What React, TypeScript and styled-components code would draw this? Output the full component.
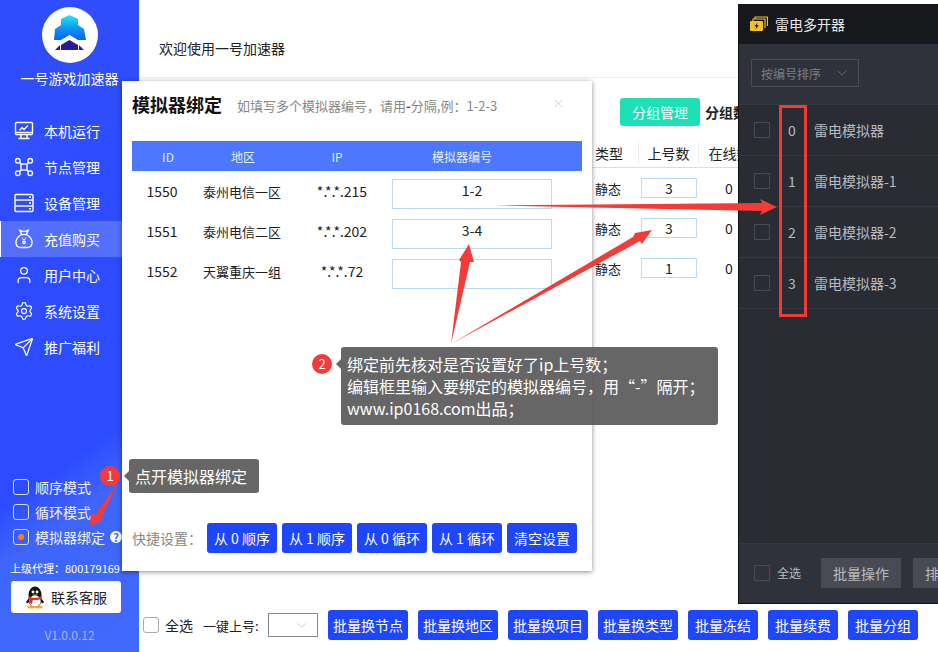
import React from "react";
import styled, { createGlobalStyle } from "styled-components";
import { Send, Settings, User, X, ChevronDown } from "lucide-react";

const GlobalStyle = createGlobalStyle`
  html, body {
    margin: 0;
    padding: 0;
    background: #fff;
  }
  * {
    box-sizing: border-box;
  }
  body {
    font-family: "Noto Sans CJK SC", "Noto Sans", sans-serif;
    font-size: 14px;
    color: #222;
  }
`;

const Page = styled.div`
  position: relative;
  display: flex;
  width: 938px;
  height: 652px;
  overflow: hidden;
  background: #fff;
`;

/* sidebar */
const Sidebar = styled.aside`
  flex: 0 0 139px;
  display: flex;
  flex-direction: column;
  align-items: stretch;
  color: #fff;
  background:
    radial-gradient(circle at 40px -60px, #2f4dfb 0 194px, transparent 195px),
    linear-gradient(145deg, #3a5bfc 0%, #2d4cff 30%, #2d4cff 68%, #3f66fb 76%, #4169fb 100%);
`;

const LogoCircle = styled.div`
  width: 56px;
  height: 56px;
  margin: 7px auto 0;
  border-radius: 50%;
  background: #fff;
  display: flex;
  align-items: flex-start;
  justify-content: center;
  padding-top: 8px;
`;

const BrandName = styled.div`
  margin-top: 5px;
  height: 20px;
  line-height: 20px;
  text-align: center;
  font-size: 14px;
`;

const Menu = styled.nav`
  margin-top: 25px;
  display: flex;
  flex-direction: column;
`;

const MenuItem = styled.div<{ $active?: boolean }>`
  height: 36px;
  display: flex;
  align-items: center;
  gap: 10px;
  padding-left: 14px;
  font-size: 14px;
  background: ${(p) => (p.$active ? "#5470fb" : "transparent")};
  border-left: ${(p) => (p.$active ? "1px solid #fff" : "0")};
  ${(p) => p.$active && "padding-left: 13px;"}
`;

const IconSlot = styled.span`
  width: 20px;
  height: 20px;
  display: flex;
  align-items: center;
  justify-content: center;
`;

const SideBottom = styled.div`
  margin-top: auto;
  display: flex;
  flex-direction: column;
`;

const ModeList = styled.div`
  display: flex;
  flex-direction: column;
  padding-left: 13px;
`;

const ModeRow = styled.label`
  height: 25px;
  display: flex;
  align-items: center;
  gap: 6px;
  font-size: 14px;
  white-space: nowrap;
  color: #f2f4ff;
`;

const ModeBox = styled.span`
  width: 16px;
  height: 16px;
  border: 1px solid #d5dcff;
  border-radius: 3px;
  display: flex;
  align-items: center;
  justify-content: center;
`;

const OrangeDot = styled.span`
  width: 6px;
  height: 6px;
  border-radius: 50%;
  background: #ff7f0e;
`;

const HelpDot = styled.span`
  width: 12px;
  height: 12px;
  margin-left: -1px;
  border-radius: 50%;
  background: #fff;
  color: #3f66fb;
  font-size: 11px;
  font-weight: 700;
  line-height: 12px;
  text-align: center;
`;

const Agent = styled.div`
  margin-top: 11px;
  padding-left: 10px;
  height: 16px;
  line-height: 16px;
  font-size: 11px;
  white-space: nowrap;
`;

const ServiceButton = styled.button`
  margin: 5px 0 0 11px;
  width: 110px;
  height: 32px;
  border: 0;
  border-radius: 3px;
  background: #fff;
  color: #222;
  font: inherit;
  font-size: 14px;
  display: flex;
  align-items: center;
  justify-content: center;
  gap: 6px;
`;

const Version = styled.div`
  margin: 12px 0 7px;
  height: 20px;
  line-height: 20px;
  text-align: center;
  font-size: 12px;
  color: #a9b4dc;
`;

/* main column */
const Main = styled.main`
  flex: 1;
  display: flex;
  flex-direction: column;
  min-width: 0;
`;

const Welcome = styled.div`
  height: 78px;
  padding: 38px 0 0 20px;
  line-height: 20px;
  font-size: 14px;
  border-bottom: 1px solid #eee;
`;

const Toolbar = styled.div`
  margin-top: 20px;
  padding-left: 481px;
  height: 28px;
  display: flex;
  align-items: center;
  gap: 5px;
  white-space: nowrap;
`;

const TealButton = styled.button`
  width: 80px;
  height: 28px;
  border: 0;
  border-radius: 3px;
  background: #1de0b4;
  color: #fff;
  font: inherit;
  font-size: 14px;
`;

const StrongLabel = styled.span`
  font-weight: 700;
  font-size: 14px;
`;

const Table = styled.div`
  margin-top: 12px;
  padding-left: 451px;
  display: flex;
  flex-direction: column;
`;

const TableHead = styled.div`
  height: 30px;
  display: grid;
  grid-template-columns: 48px 60px 62px;
  align-items: center;
  border-bottom: 1px solid #ddd;
`;

const HeadCell = styled.div<{ $first?: boolean }>`
  height: 22px;
  line-height: 22px;
  text-align: center;
  white-space: nowrap;
  font-size: 14px;
  border-left: ${(p) => (p.$first ? "0" : "1px solid #eee")};
  ${(p) => p.$first && "text-align: left; padding-left: 5px;"}
`;

const TableRow = styled.div`
  height: 40px;
  display: grid;
  grid-template-columns: 48px 60px 62px;
  align-items: center;
`;

const TypeCell = styled.div`
  padding-left: 5px;
  font-size: 13px;
`;

const CountCell = styled.div`
  display: flex;
  justify-content: center;
  padding-left: 2px;
`;

const CountInput = styled.div`
  width: 56px;
  height: 20px;
  line-height: 18px;
  text-align: center;
  border: 1px solid #b8dcf5;
  font-size: 14px;
`;

const NumCell = styled.div`
  text-align: center;
  font-size: 14px;
`;

const BottomBar = styled.div`
  margin-top: auto;
  height: 42px;
  padding: 0 0 12px 4px;
  display: flex;
  align-items: center;
  white-space: nowrap;
`;

const PlainBox = styled.span`
  width: 16px;
  height: 16px;
  border: 1px solid #aaa;
  border-radius: 3px;
`;

const BarLabel = styled.span<{ $left: number }>`
  margin-left: ${(p) => p.$left}px;
  font-size: 14px;
`;

const QuickLabel = styled(BarLabel)`
  width: 55px;
  font-size: 13px;
`;

const SelectBox = styled.div`
  width: 50px;
  height: 24px;
  margin: 0 10px;
  border: 1px solid #888;
  display: flex;
  align-items: center;
  justify-content: flex-end;
  padding-right: 8px;
  color: #bbb;
`;

const BlueButton = styled.button<{ $width: number }>`
  width: ${(p) => p.$width}px;
  height: 30px;
  padding: 0;
  border: 0;
  border-radius: 3px;
  background: #1e46ff;
  color: #fff;
  font: inherit;
  font-size: 14px;
  white-space: nowrap;
`;

const ButtonRow = styled.div<{ $gap: number }>`
  display: flex;
  gap: ${(p) => p.$gap}px;
`;

/* bind dialog */
const Dialog = styled.section`
  position: absolute;
  left: 122px;
  top: 81px;
  width: 470px;
  height: 490px;
  padding: 0 10px 18px;
  background: #fff;
  box-shadow: 0 1px 5px rgba(0, 0, 0, 0.45);
  display: flex;
  flex-direction: column;
`;

const DialogHead = styled.div`
  height: 60px;
  padding-top: 10px;
  display: flex;
  align-items: flex-start;
  position: relative;
`;

const DialogTitle = styled.h2`
  margin: 0;
  font-size: 18px;
  line-height: 26px;
  font-weight: 700;
  color: #111;
`;

const DialogHint = styled.span`
  margin: 4px 0 0 15px;
  line-height: 22px;
  font-size: 13px;
  color: #888;
`;

const RedDash = styled.b`
  color: #f00;
`;

const CloseIcon = styled.span`
  position: absolute;
  left: 420px;
  top: 16px;
  color: #aaa;
  display: flex;
`;

const BindHead = styled.div`
  height: 30px;
  background: #4c78ff;
  color: #e8eeff;
  font-size: 12px;
  display: grid;
  grid-template-columns: 72px 78px 110px 1fr;
  align-items: center;
  text-align: center;
`;

const BindHeadLast = styled.div`
  padding-right: 50px;
`;

const BindRows = styled.div`
  margin-top: 3px;
  display: flex;
  flex-direction: column;
`;

const BindRow = styled.div`
  height: 40px;
  display: grid;
  grid-template-columns: 60px 100px 100px 1fr;
  align-items: center;
  text-align: center;
`;

const BindId = styled.div`
  font-size: 14px;
  padding-bottom: 6px;
`;

const BindArea = styled.div`
  font-size: 13px;
  white-space: nowrap;
  padding-bottom: 6px;
`;

const BindInput = styled.div`
  width: 160px;
  height: 30px;
  line-height: 20px;
  border: 1px solid #b8dcf5;
  font-size: 14px;
`;

const DialogFoot = styled.div`
  margin-top: auto;
  display: flex;
  align-items: center;
`;

const FootLabel = styled.span`
  width: 75px;
  color: #888;
  font-size: 14px;
  white-space: nowrap;
`;

/* LD player window */
const DarkWindow = styled.section`
  position: absolute;
  left: 738px;
  top: 4px;
  width: 300px;
  height: 600px;
  background: #30323b;
  display: flex;
  flex-direction: column;
  color: #b9bbc0;
  border-left: 1px solid #111;
  border-bottom: 1px solid #111;
`;

const DarkTitle = styled.div`
  height: 40px;
  background: #17181c;
  color: #e8e8ea;
  display: flex;
  align-items: center;
  gap: 7px;
  padding-left: 11px;
  font-size: 14px;
`;

const DarkTools = styled.div`
  height: 60px;
  padding: 15px 0 0 12px;
`;

const DarkSelect = styled.div`
  width: 108px;
  height: 28px;
  border: 1px solid #4a4c56;
  display: flex;
  align-items: center;
  justify-content: space-between;
  padding: 0 8px 0 9px;
  font-size: 12px;
  color: #7b7d85;
`;

const DarkList = styled.div`
  flex: 1;
  background: #2a2c34;
  display: flex;
  flex-direction: column;
`;

const DarkRow = styled.div`
  height: 51px;
  display: flex;
  align-items: center;
  padding-left: 15px;
  border-top: 1px solid #363841;
  font-size: 14px;

  &:last-child {
    height: 52px;
    border-bottom: 1px solid #363841;
  }
`;

const DarkBox = styled.span`
  width: 16px;
  height: 16px;
  flex: none;
  border: 1px solid #474953;
`;

const DarkIndex = styled.span`
  width: 44px;
  text-align: center;
`;

const DarkFoot = styled.div`
  height: 60px;
  display: flex;
  align-items: center;
  padding: 0 0 2px 15px;
  border-top: 1px solid #363841;
`;

const DarkAll = styled.span`
  margin-left: 7px;
  font-size: 12px;
`;

const DarkButton = styled.button`
  flex: none;
  width: 80px;
  height: 30px;
  margin-left: 20px;
  border: 0;
  background: #484a54;
  color: #b9bbc0;
  font: inherit;
  font-size: 14px;
`;

const DarkButtonNext = styled(DarkButton)`
  margin-left: 12px;
  padding: 0 0 0 12px;
  text-align: left;
`;

/* annotations laid over the screenshot */
const ArrowLayer = styled.svg`
  position: absolute;
  left: 0;
  top: 0;
  pointer-events: none;
`;

const RedFrame = styled.div`
  position: absolute;
  left: 779px;
  top: 105px;
  width: 28px;
  height: 212px;
  border: 3px solid #f33a36;
`;

const Callout = styled.div<{ $left: number; $top: number; $width: number }>`
  position: absolute;
  left: ${(p) => p.$left}px;
  top: ${(p) => p.$top}px;
  width: ${(p) => p.$width}px;
  padding: 6px;
  border-radius: 3px;
  background: rgba(90, 90, 90, 0.93);
  color: #fff;
  font-size: 16px;
  line-height: 22px;
  white-space: nowrap;

  &::before {
    content: "";
    position: absolute;
    left: -5px;
    top: 12px;
    border-style: solid;
    border-width: 5px 5px 5px 0;
    border-color: transparent rgba(90, 90, 90, 0.93) transparent transparent;
  }
`;

const Badge = styled.div<{ $left: number; $top: number }>`
  position: absolute;
  left: ${(p) => p.$left}px;
  top: ${(p) => p.$top}px;
  width: 20px;
  height: 20px;
  border-radius: 50%;
  background: #f43a3a;
  color: #fff;
  font-size: 13px;
  line-height: 20px;
  text-align: center;
`;

const LogoIcon = () => (
  <svg width="36" height="36" viewBox="0 0 36 36">
    <defs>
      <linearGradient id="logoFill" x1="0" y1="0" x2="0" y2="1">
        <stop offset="0" stopColor="#1ee8ff" />
        <stop offset="0.5" stopColor="#0f9af2" />
        <stop offset="1" stopColor="#0c62ee" />
      </linearGradient>
    </defs>
    <path d="M17.5 0 L26 4 V10 L32 14 L34 25 L26 25 L17.5 20 L9 25 L2 25 L3 14 L9 10 V4 Z" fill="url(#logoFill)" />
    <path d="M17.5 25 L26 30 V35 H9 V30 Z" fill="#2a1a99" />
    <path d="M3 35 H8 V30 Z M32 35 H27 V30 Z" fill="#2a1a99" />
  </svg>
);

const MonitorIcon = () => (
  <svg width="20" height="20" viewBox="0 0 20 20" fill="none" stroke="#fff" strokeWidth="1.4">
    <rect x="1.5" y="1.5" width="17" height="12" rx="1" />
    <path d="M5.5 9.5 L8 6.5 L10 8.5 L14 4.5" />
    <path d="M1.5 11.5 H18.5" />
    <path d="M7 13.5 V17 M13 13.5 V17 M4.5 17.5 H15.5" />
  </svg>
);

const NodesIcon = () => (
  <svg width="20" height="20" viewBox="0 0 20 20" fill="none" stroke="#fff" strokeWidth="1.4">
    <circle cx="3.8" cy="3.8" r="2.3" />
    <circle cx="16.2" cy="3.8" r="2.3" />
    <circle cx="3.8" cy="16.2" r="2.3" />
    <circle cx="16.2" cy="16.2" r="2.3" />
    <rect x="7" y="7" width="6" height="6" />
    <path d="M5.5 5.5 L7 7 M14.5 5.5 L13 7 M5.5 14.5 L7 13 M14.5 14.5 L13 13" />
  </svg>
);

const ServerIcon = () => (
  <svg width="20" height="20" viewBox="0 0 20 20" fill="none" stroke="#fff" strokeWidth="1.4">
    <rect x="1" y="1.5" width="18" height="17" rx="1" />
    <path d="M1 7 H19 M1 13 H19" />
    <path d="M15 4.2 H17 M15 10 H17 M15 15.8 H17" />
  </svg>
);

const BagIcon = () => (
  <svg width="20" height="20" viewBox="0 0 20 20" fill="none" stroke="#fff" strokeWidth="1.4">
    <path d="M6 1.5 C8 2.5 12 2.5 14 1.5 L12.5 5.5 C16 7.5 18.5 11 18 14.5 C17.5 17.5 15.5 18.5 13 18.5 H7 C4.5 18.5 2.5 17.5 2 14.5 C1.5 11 4 7.5 7.5 5.5 Z" />
    <path d="M7.5 5.5 H12.5" />
    <path d="M8 8.5 L10 11.5 L12 8.5 M10 11.5 V15.5 M8 12.5 H12 M8 14 H12" strokeWidth="1" />
  </svg>
);

const PenguinIcon = () => (
  <svg width="20" height="23" viewBox="0 0 20 23">
    <path d="M4 12 L1 16 L2.5 17.5 L5 15 Z M16 12 L19 16 L17.5 17.5 L15 15 Z" fill="#111" />
    <ellipse cx="10" cy="9" rx="6.5" ry="8.5" fill="#111" />
    <ellipse cx="10" cy="15" rx="6" ry="6" fill="#fff" stroke="#111" strokeWidth="0.6" />
    <path d="M3.5 10 C7 12.5 13 12.5 16.5 10 L16.5 12.5 C13 14.5 7 14.5 3.5 12.5 Z" fill="#e02b20" />
    <path d="M4.5 13 L8 13 L7 18 L4.5 17 Z" fill="#e02b20" />
    <circle cx="8" cy="6" r="1.4" fill="#fff" />
    <circle cx="12" cy="6" r="1.4" fill="#fff" />
    <path d="M7.5 8.5 H12.5 L10 10.2 Z" fill="#f6a81c" />
    <ellipse cx="6" cy="21" rx="3.5" ry="1.6" fill="#f6a81c" />
    <ellipse cx="14" cy="21" rx="3.5" ry="1.6" fill="#f6a81c" />
  </svg>
);

const LdIcon = () => (
  <svg width="18" height="16" viewBox="0 0 18 16">
    <path d="M5 3 V1 H17.5 V10" fill="none" stroke="#f4c11f" strokeWidth="1.2" />
    <path d="M3 5 V3 H15 V12" fill="none" stroke="#f4c11f" strokeWidth="1.2" />
    <rect x="0" y="5" width="13" height="10" rx="1" fill="#f4c11f" />
    <path d="M7.5 6.5 L4.5 10.5 H6.5 L5.5 13.5 L8.8 9.2 H6.8 Z" fill="#17181c" />
  </svg>
);

const menu = [
  { label: "本机运行", icon: <MonitorIcon /> },
  { label: "节点管理", icon: <NodesIcon /> },
  { label: "设备管理", icon: <ServerIcon /> },
  { label: "充值购买", icon: <BagIcon />, active: true },
  { label: "用户中心", icon: <User size={20} strokeWidth={1.5} /> },
  { label: "系统设置", icon: <Settings size={20} strokeWidth={1.5} /> },
  { label: "推广福利", icon: <Send size={20} strokeWidth={1.5} /> },
];

const bindings = [
  { id: "1550", area: "泰州电信一区", ip: "*.*.*.215", value: "1-2" },
  { id: "1551", area: "泰州电信二区", ip: "*.*.*.202", value: "3-4" },
  { id: "1552", area: "天翼重庆一组", ip: "*.*.*.72", value: "" },
];

const counts = ["3", "3", "1"];
const quick = ["从 0 顺序", "从 1 顺序", "从 0 循环", "从 1 循环", "清空设置"];
const batch = [
  { label: "批量换节点", width: 80 },
  { label: "批量换地区", width: 80 },
  { label: "批量换项目", width: 80 },
  { label: "批量换类型", width: 80 },
  { label: "批量冻结", width: 70 },
  { label: "批量续费", width: 70 },
  { label: "批量分组", width: 70 },
];
const players = [
  { index: "0", name: "雷电模拟器" },
  { index: "1", name: "雷电模拟器-1" },
  { index: "2", name: "雷电模拟器-2" },
  { index: "3", name: "雷电模拟器-3" },
];

const App: React.FC = () => {
  return (
    <Page>
      <GlobalStyle />
      <Sidebar>
        <LogoCircle>
          <LogoIcon />
        </LogoCircle>
        <BrandName>一号游戏加速器</BrandName>
        <Menu>
          {menu.map((item) => (
            <MenuItem key={item.label} $active={item.active}>
              <IconSlot>{item.icon}</IconSlot>
              {item.label}
            </MenuItem>
          ))}
        </Menu>
        <SideBottom>
          <ModeList>
            <ModeRow>
              <ModeBox />
              顺序模式
            </ModeRow>
            <ModeRow>
              <ModeBox />
              循环模式
            </ModeRow>
            <ModeRow>
              <ModeBox>
                <OrangeDot />
              </ModeBox>
              模拟器绑定
              <HelpDot>?</HelpDot>
            </ModeRow>
          </ModeList>
          <Agent>上级代理&#xFF1A;800179169</Agent>
          <ServiceButton>
            <PenguinIcon />
            联系客服
          </ServiceButton>
          <Version>V1.0.0.12</Version>
        </SideBottom>
      </Sidebar>

      <Main>
        <Welcome>欢迎使用一号加速器</Welcome>
        <Toolbar>
          <TealButton>分组管理</TealButton>
          <StrongLabel>分组数</StrongLabel>
        </Toolbar>
        <Table>
          <TableHead>
            <HeadCell $first>类型</HeadCell>
            <HeadCell>上号数</HeadCell>
            <HeadCell>在线数</HeadCell>
          </TableHead>
          {counts.map((count, i) => (
            <TableRow key={i}>
              <TypeCell>静态</TypeCell>
              <CountCell>
                <CountInput>{count}</CountInput>
              </CountCell>
              <NumCell>0</NumCell>
            </TableRow>
          ))}
        </Table>
        <BottomBar>
          <PlainBox />
          <BarLabel $left={6}>全选</BarLabel>
          <QuickLabel $left={10}>一键上号:</QuickLabel>
          <SelectBox>
            <ChevronDown size={15} strokeWidth={1.2} />
          </SelectBox>
          <ButtonRow $gap={10}>
            {batch.map((item) => (
              <BlueButton key={item.label} $width={item.width}>
                {item.label}
              </BlueButton>
            ))}
          </ButtonRow>
        </BottomBar>
      </Main>

      <Dialog>
        <DialogHead>
          <DialogTitle>模拟器绑定</DialogTitle>
          <DialogHint>
            如填写多个模拟器编号&#xFF0C;请用<RedDash>-</RedDash>分隔,例&#xFF1A;1-2-3
          </DialogHint>
          <CloseIcon>
            <X size={13} strokeWidth={1} />
          </CloseIcon>
        </DialogHead>
        <BindHead>
          <div>ID</div>
          <div>地区</div>
          <div>IP</div>
          <BindHeadLast>模拟器编号</BindHeadLast>
        </BindHead>
        <BindRows>
          {bindings.map((row) => (
            <BindRow key={row.id}>
              <BindId>{row.id}</BindId>
              <BindArea>{row.area}</BindArea>
              <BindId>{row.ip}</BindId>
              <BindInput>{row.value}</BindInput>
            </BindRow>
          ))}
        </BindRows>
        <DialogFoot>
          <FootLabel>快捷设置&#xFF1A;</FootLabel>
          <ButtonRow $gap={5}>
            {quick.map((label) => (
              <BlueButton key={label} $width={70}>
                {label}
              </BlueButton>
            ))}
          </ButtonRow>
        </DialogFoot>
      </Dialog>

      <DarkWindow>
        <DarkTitle>
          <LdIcon />
          雷电多开器
        </DarkTitle>
        <DarkTools>
          <DarkSelect>
            按编号排序
            <ChevronDown size={16} strokeWidth={1} />
          </DarkSelect>
        </DarkTools>
        <DarkList>
          {players.map((p) => (
            <DarkRow key={p.index}>
              <DarkBox />
              <DarkIndex>{p.index}</DarkIndex>
              {p.name}
            </DarkRow>
          ))}
        </DarkList>
        <DarkFoot>
          <DarkBox />
          <DarkAll>全选</DarkAll>
          <DarkButton>批量操作</DarkButton>
          <DarkButtonNext>排序</DarkButtonNext>
        </DarkFoot>
      </DarkWindow>

      <RedFrame />
      <ArrowLayer width="938" height="652" viewBox="0 0 938 652">
        <g fill="#f53a38">
          <polygon points="494,205.5 762,203 760,199 777,207 760,215 762,211" />
          <polygon points="451,344 461,262 459,260 469,244 474,262 470,262" />
          <polygon points="451,344 633,237 635,233 652,230 642,244 640,241" />
          <polygon points="118,483 95,515 91,513 90,526 104,519 101,518" />
        </g>
      </ArrowLayer>

      <Callout $left={129} $top={459} $width={130}>
        点开模拟器绑定
      </Callout>
      <Badge $left={100} $top={466}>
        1
      </Badge>
      <Callout $left={341} $top={347} $width={377}>
        绑定前先核对是否设置好了ip上号数&#xFF1B;
        <br />
        编辑框里输入要绑定的模拟器编号&#xFF0C;用“-”隔开&#xFF1B;
        <br />
        www.ip0168.com出品&#xFF1B;
      </Callout>
      <Badge $left={312} $top={354}>
        2
      </Badge>
    </Page>
  );
};

export default App;
